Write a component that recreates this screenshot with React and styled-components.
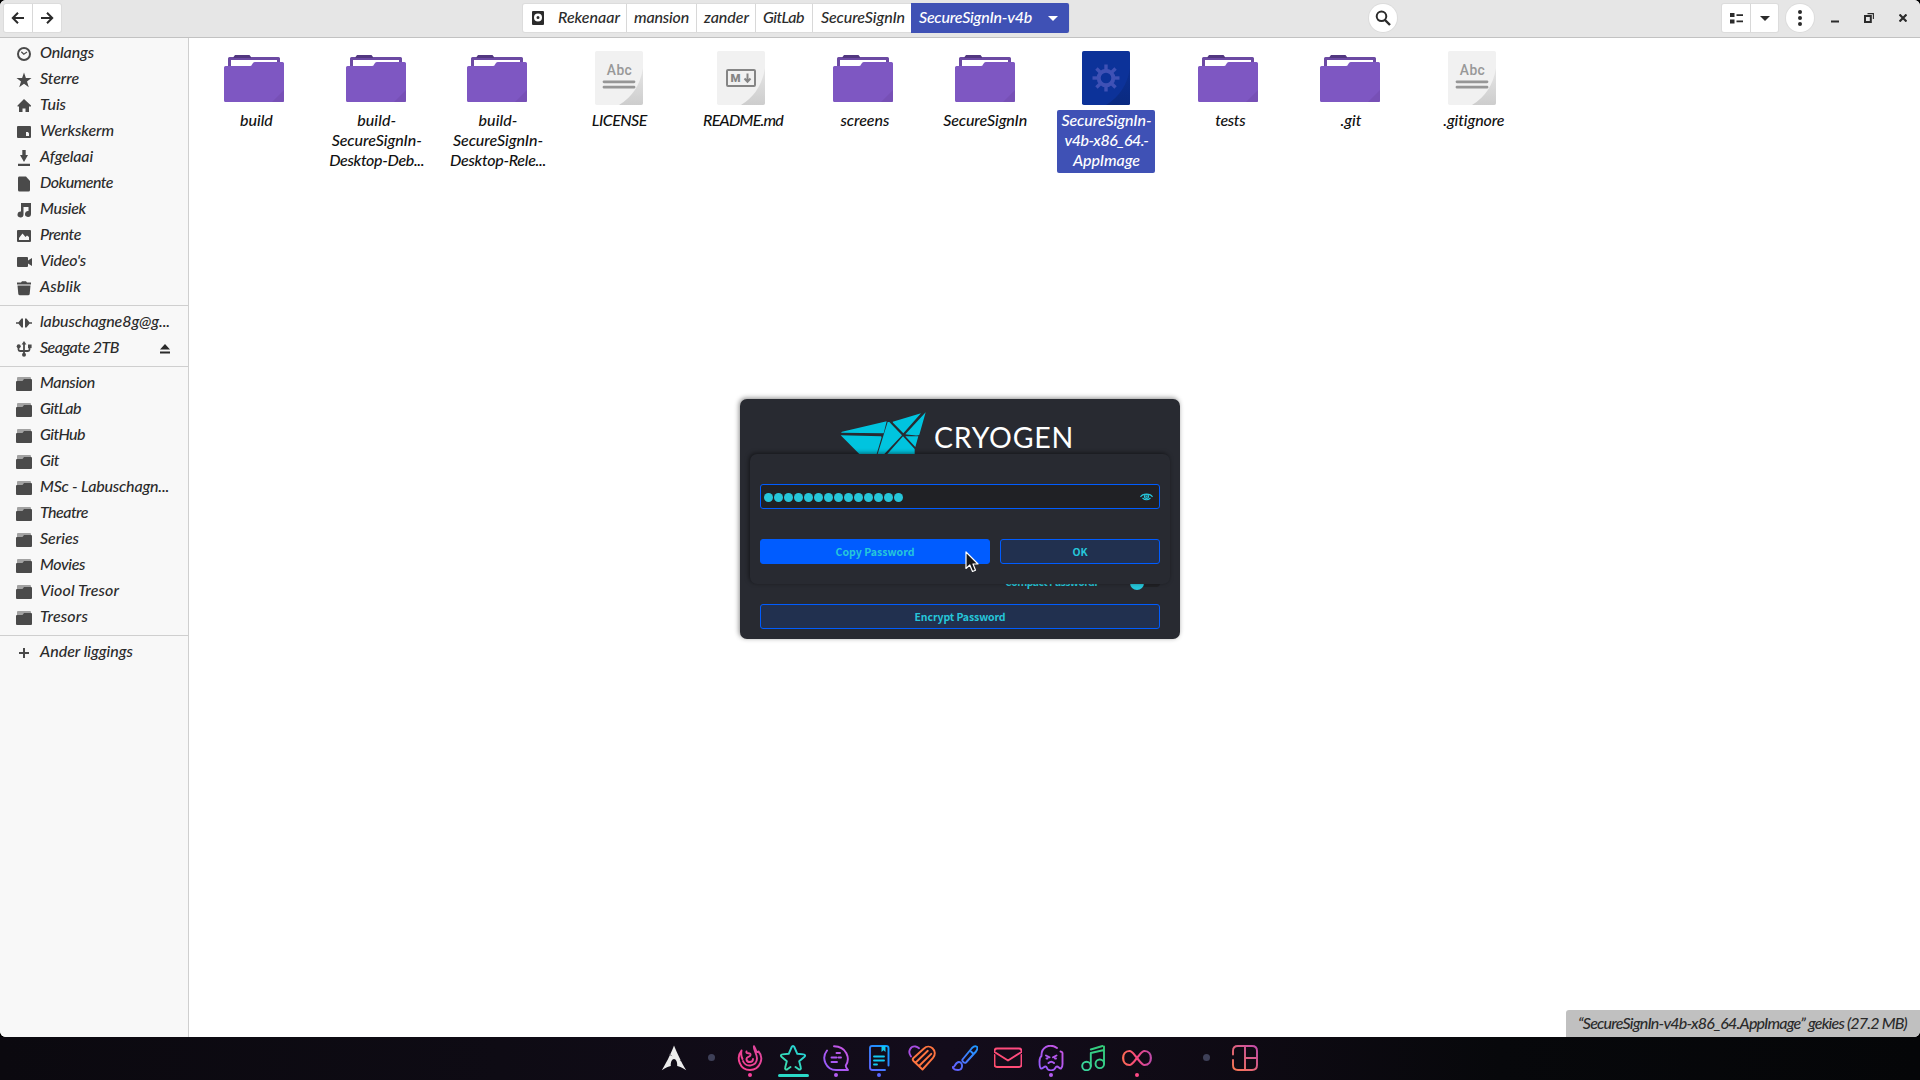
import React, { useLayoutEffect, useRef, useState } from "react";
import styled, { createGlobalStyle } from "styled-components";

const script = `Lato, "Open Sans", "Liberation Sans", sans-serif`;
const ui = `"Noto Sans CJK SC", "Noto Sans", sans-serif`;

const Global = createGlobalStyle`
  *, *::before, *::after { box-sizing: border-box; }
  html, body { margin: 0; background: #000; overflow: hidden; }
  svg { display: block; flex: none; }
`;

const FitBox = styled.span`
  display: inline-block;
  white-space: nowrap;
`;

/* Tracks a label out (or in) so that it fills the given width. */
function Fit({ w, children }) {
  const ref = useRef(null);
  const [spacing, setSpacing] = useState(0);
  useLayoutEffect(() => {
    const natural = ref.current.getBoundingClientRect().width;
    setSpacing((w - natural) / children.length);
  }, [w, children]);
  return (
    <FitBox ref={ref} style={{ letterSpacing: spacing }}>
      {children}
    </FitBox>
  );
}

/* ---------- shell ---------- */

const Screen = styled.div`
  position: relative;
  width: 1920px;
  height: 1080px;
  display: flex;
  flex-direction: column;
  background: #000;
  font-family: ${script};
  font-style: italic;
  font-weight: 500;
  font-size: 16px;
  color: #2b2b2b;
`;

const Window = styled.main`
  height: 1037px;
  display: flex;
  flex-direction: column;
  background: #fff;
  border-radius: 6px;
  overflow: hidden;
`;

const Header = styled.header`
  height: 38px;
  flex: none;
  display: flex;
  padding: 4px 0 0 4px;
  background: #e6e6e6;
  border-bottom: 1px solid #c2c2c2;
`;

const Group = styled.div`
  display: flex;
  height: 28px;
  background: #fff;
  border-radius: 2px;
  box-shadow: 0 0 0 1px #dcdcdc;
  margin-left: ${(p) => p.$left || 0}px;
`;

const Cell = styled.button`
  width: ${(p) => p.$w}px;
  height: 28px;
  padding: 0;
  border: 0;
  border-right: ${(p) => (p.$last ? 0 : "1px solid #d8d8d8")};
  background: none;
  color: #2b2b2b;
  display: flex;
  align-items: center;
  justify-content: center;
`;

const Crumb = styled.div`
  width: ${(p) => p.$w}px;
  height: 28px;
  padding: 0 0 3px ${(p) => p.$pad}px;
  border-right: ${(p) => (p.$last ? 0 : "1px solid #d8d8d8")};
  display: flex;
  align-items: center;
  gap: 14px;
`;

const DriveIcon = styled.svg`
  margin-top: 3px;
`;

const ActiveCrumb = styled.div`
  width: 158px;
  height: 30px;
  margin-top: -1px;
  padding: 0 11px 3px 8px;
  background: #3f51b5;
  color: #fff;
  border-radius: 0 2px 2px 0;
  display: flex;
  align-items: center;
  justify-content: space-between;
  svg { margin-top: 3px; }
`;

const Round = styled.button`
  width: 28px;
  height: 28px;
  padding: 0;
  margin-left: ${(p) => p.$left}px;
  border: 0;
  border-radius: 50%;
  background: #fff;
  box-shadow: 0 0 0 1px #dcdcdc;
  display: flex;
  align-items: center;
  justify-content: center;
`;

const WinControls = styled.div`
  display: flex;
  align-items: center;
  height: 28px;
  margin-left: 17px;
  gap: 25px;
`;

const Body = styled.div`
  flex: 1;
  display: flex;
  min-height: 0;
`;

/* ---------- sidebar ---------- */

const Sidebar = styled.nav`
  width: 189px;
  background: #f8f8f8;
  border-right: 1px solid #cfcfcf;
`;

const Section = styled.ul`
  list-style: none;
  margin: 0;
  padding: ${(p) => (p.$first ? "3px 0 4px" : "4px 0 4px")};
  border-bottom: ${(p) => (p.$last ? 0 : "1px solid #cfcfcf")};
`;

const Place = styled.li`
  height: 26px;
  padding: 0 18px 0 16px;
  display: flex;
  align-items: center;
  gap: 8px;
  color: #4a4a4a;
`;

const PlaceName = styled.span`
  flex: 1;
  color: #2b2b2b;
  line-height: 20px;
  margin-top: -5px;
`;

/* ---------- files ---------- */

const Files = styled.section`
  flex: 1;
  display: grid;
  grid-template-columns: repeat(11, 121.8px);
  align-content: start;
  padding: 13px 0 0 4px;
`;

const File = styled.div`
  display: flex;
  flex-direction: column;
  align-items: center;
  color: #111;
`;

const Thumb = styled.div`
  height: 54px;
  padding-top: ${(p) => (p.$folder ? 4 : 0)}px;
`;

const FileName = styled.div`
  margin-top: 5px;
  width: 98px;
  padding: 0 0 3px ${(p) => (p.$selected ? 0 : p.$shift || 0)}px;
  border-radius: 2px;
  display: flex;
  flex-direction: column;
  align-items: center;
  line-height: 20px;
  background: ${(p) => (p.$selected ? "#3f51b5" : "transparent")};
  color: ${(p) => (p.$selected ? "#fff" : "#111")};
`;

const Status = styled.div`
  position: absolute;
  right: 0;
  top: 1010px;
  width: 354px;
  height: 27px;
  padding: 0 13px 3px 12px;
  background: #c0c0c0;
  color: #2b2b2b;
  border-radius: 3px 0 6px 0;
  display: flex;
  align-items: center;
`;

/* ---------- password dialog ---------- */

const Dialog = styled.div`
  position: absolute;
  left: 740px;
  top: 399px;
  width: 440px;
  height: 240px;
  padding: 13px 20px 10px;
  border-radius: 7px;
  background: #282a31;
  box-shadow: -1px -1px 5px rgba(0, 0, 0, 0.45);
  display: flex;
  flex-direction: column;
  font-family: ${ui};
  font-style: normal;
  font-weight: 700;
  font-size: 10.5px;
  color: #26c6da;
`;

const Brand = styled.div`
  height: 42px;
  display: flex;
  padding-left: 80px;
  gap: 8px;
`;

const BrandName = styled.div`
  color: #fff;
  font: 400 28.5px/34px ${script};
  padding-top: 8px;
`;

const CompactRow = styled.div`
  flex: 1;
  display: flex;
  align-items: flex-end;
  justify-content: flex-end;
  gap: 33px;
  padding-bottom: 14px;
  line-height: 16px;
`;

const Track = styled.div`
  width: 30px;
  height: 8px;
  margin-bottom: 3px;
  border-radius: 4px;
  background: #202125;
  display: flex;
  align-items: center;
  &::before {
    content: "";
    width: 14px;
    height: 14px;
    border-radius: 50%;
    background: #26c6da;
  }
`;

const Button = styled.button`
  width: ${(p) => p.$w}px;
  height: 25px;
  padding: 0;
  border: 1px solid #005cff;
  border-radius: 3px;
  background: ${(p) => (p.$primary ? "#005cff" : "#21304f")};
  color: #26c6da;
  font: inherit;
  line-height: 22px;
`;

const Sheet = styled.div`
  position: absolute;
  left: 10px;
  top: 55px;
  width: 420px;
  height: 130px;
  padding: 30px 10px 20px;
  border-radius: 7px;
  background: #282a31;
  box-shadow: -1px -1px 4px rgba(0, 0, 0, 0.5);
  display: flex;
  flex-direction: column;
  justify-content: space-between;
`;

const Field = styled.div`
  height: 25px;
  border: 1px solid #005cff;
  border-radius: 3px;
  background: #202125;
  padding: 0 6px 0 2.5px;
  display: flex;
  align-items: center;
  justify-content: space-between;
`;

const Dots = styled.div`
  display: flex;
  gap: 1px;
  padding-top: 2px;
`;

const Dot = styled.i`
  width: 9px;
  height: 9px;
  border-radius: 50%;
  background: #26c6da;
`;

const Buttons = styled.div`
  display: flex;
  gap: 10px;
`;

const Pointer = styled.svg`
  position: absolute;
  left: 965px;
  top: 551px;
`;

/* ---------- dock ---------- */

const Dock = styled.footer`
  height: 43px;
  padding-left: 652px;
  display: flex;
  background: linear-gradient(90deg, #0b090f 0, #0e0b14 500px, #130c1b 950px, #0e0a13 1250px, #07080b 1500px, #050608 100%);
`;

const Launcher = styled.div`
  position: relative;
  width: 43px;
  height: 43px;
  padding-bottom: 1px;
  display: flex;
  align-items: center;
  justify-content: center;
  &::after {
    content: "";
    position: absolute;
    left: ${(p) => (p.$active ? 6 : 19.5)}px;
    top: ${(p) => (p.$active ? 36.5 : 36)}px;
    width: ${(p) => (p.$active ? 31 : 4)}px;
    height: ${(p) => (p.$active ? 3 : 4)}px;
    border-radius: 2px;
    background: ${(p) => p.$run || "transparent"};
  }
`;

const Divider = styled.div`
  width: 33.5px;
  margin-left: ${(p) => p.$left || 0}px;
  display: flex;
  align-items: center;
  justify-content: center;
  &::before {
    content: "";
    width: 7px;
    height: 7px;
    margin-top: -2px;
    border-radius: 50%;
    background: #3e4058;
  }
`;

/* ---------- drawings ---------- */

const Arrow = ({ flip }) => (
  <svg width="14" height="14" viewBox="0 0 14 14" fill="none" stroke="#2b2b2b" strokeWidth="2" transform={flip ? "scale(-1 1)" : undefined}>
    <path d="M13 7H2.5M7 1.8 1.8 7 7 12.2" />
  </svg>
);

const Caret = ({ color = "#2b2b2b" }) => (
  <svg width="10" height="5" viewBox="0 0 10 5">
    <path d="M0 0h10L5 5z" fill={color} />
  </svg>
);

const FolderArt = () => (
  <svg width="60" height="47" viewBox="0 0 60 47">
    <path d="M4 12V3.5Q4 2 5.500 2H54.500Q56 2 56 3.500V9H53V5H7V12z" fill="#6c4aa3" />
    <path d="M9.500 2 11 0H25.500L27 2V3H9.500z" fill="#523780" />
    <path d="M0 12.500Q0 11 1.500 11H26Q27.500 11 28 9.500L29 8Q29.600 7 31 7H58.500Q60 7 60 8.500V45.500Q60 47 58.500 47H1.500Q0 47 0 45.500z" fill="#7e57c2" />
    <path d="M60 35 48 47H58.500Q60 47 60 45.500z" fill="#7750b6" />
  </svg>
);

const Sheet54 = ({ children, id, blue }) => (
  <svg width="48" height="54" viewBox="0 0 48 54">
    <defs>
      <linearGradient id={id} x1="0" y1="0" x2="0" y2="1">
        <stop offset="0" stopColor={blue ? "#0b2f90" : "#e6e6e6"} />
        <stop offset="1" stopColor={blue ? "#0a2a80" : "#cdcdcd"} />
      </linearGradient>
    </defs>
    <rect width="48" height="54" rx="1.8" fill={blue ? "#0c3299" : "#f1f1f1"} />
    <path d="M48 17Q44 42 24 54H46.200Q48 54 48 52.200z" fill={`url(#${id})`} />
    {children}
  </svg>
);

const AbcArt = ({ id }) => (
  <Sheet54 id={id}>
    <text x="11.800" y="24.200" fontFamily="Roboto, sans-serif" fontStyle="normal" fontWeight="500" fontSize="13.800" textLength="25" fill="#989898">Abc</text>
    <path d="M9 30.800h30M9 36.200h30" stroke="#969696" strokeWidth="2.800" strokeLinecap="round" />
  </Sheet54>
);

const MdArt = () => (
  <Sheet54 id="md">
    <rect x="10" y="19" width="28" height="16" rx="1" fill="none" stroke="#858585" strokeWidth="2" />
    <text x="13.500" y="31" fontFamily="Roboto, sans-serif" fontStyle="normal" fontWeight="900" fontSize="11.500" fill="#858585">M</text>
    <path d="M30.500 22.500v7M27.500 27.500l3 3.200 3-3.200" fill="none" stroke="#858585" strokeWidth="2" />
  </Sheet54>
);

const GearArt = () => (
  <Sheet54 id="gear" blue>
    <g stroke="#3f51b5" fill="none">
      <circle cx="24" cy="27" r="7.300" strokeWidth="4" />
      {[0, 45, 90, 135, 180, 225, 270, 315].map((a) => (
        <path key={a} d="M24 18.500V13.500" strokeWidth="3.400" transform={`rotate(${a} 24 27)`} />
      ))}
    </g>
  </Sheet54>
);

const glyphs = {
  clock: <><circle cx="8" cy="8" r="6" fill="none" stroke="currentColor" strokeWidth="2" /><path d="M5.300 5.800 7.800 8.200 11 6" fill="none" stroke="currentColor" strokeWidth="1.300" /></>,
  star: <path d="M8 .5 9.900 6H15.500L11 9.400 12.800 15.200 8 11.700 3.200 15.200 5 9.400 .5 6H6.100z" />,
  home: <path d="M8 1 1.500 7.500V8.500H3V14H6.500V10.500H9.500V14H13V8.500H15V7.500z" />,
  desk: <path fillRule="evenodd" d="M2 2H14Q15 2 15 3V13Q15 14 14 14H2Q1 14 1 13V3Q1 2 2 2zM10 8V12H13V9.500L12 8z" />,
  down: <path d="M6.300 0H9.700V5H12L8 12 4 5H6.300zM2 13.800H14V16H2z" />,
  doc: <path d="M3 .5H10L14 5V14Q14 15.500 12.500 15.500H3.500Q2 15.500 2 14V2Q2 .5 3 .5z" />,
  music: <path d="M5 1H15V12A3 3 0 1 1 12.500 9V5H7.500V12.500A3 3 0 1 1 5 9.500z" />,
  pic: <path fillRule="evenodd" d="M2 2H14Q15 2 15 3V13Q15 14 14 14H2Q1 14 1 13V3Q1 2 2 2zM3 12H13V9L11 7.500 9.500 9 6.500 5.500 3 10z" />,
  video: <path d="M2 3H11Q12 3 12 4V6.500L16 4V12L12 9.500V12Q12 13 11 13H2Q1 13 1 12V4Q1 3 2 3z" />,
  trash: <path d="M1 2.500H5L6 1.200H10L11 2.500H15V4.500H1zM1.500 5.500H14.500L13.700 14Q13.500 15.300 12 15.300H4Q2.500 15.300 2.300 14z" />,
  net: <path d="M0 7.200H2.500L5.500 3.500H7V12.500H5.500L2.500 8.800H0zM16 7.200H13.500L10.500 3.500H9V12.500H10.500L13.500 8.800H16z" />,
  usb: <><path d="M8 2V14M2.500 5V8.500Q2.500 10 4 10H12Q13.500 10 13.500 8.500V5" fill="none" stroke="currentColor" strokeWidth="1.800" /><path d="M5.600 3.500 8 0 10.400 3.500z" /><rect x="12" y="3.500" width="3.600" height="3.600" /><circle cx="2.700" cy="5.300" r="2" /><circle cx="8" cy="13.800" r="2" /></>,
  folder: <><path d="M1 5V2Q1 1 2 1H14Q15 1 15 2V4H9L7 5z" fill="#a2a2a2" /><path d="M0 6Q0 5 1 5H6.500L8 3H15Q16 3 16 4V14Q16 15 15 15H1Q0 15 0 14z" /></>,
  plus: <path d="M7 3H9V7H13V9H9V13H7V9H3V7H7z" />,
};

const Glyph = ({ name }) => (
  <svg width="16" height="16" viewBox="0 0 16 16" fill="currentColor">{glyphs[name]}</svg>
);

const Line = ({ id, from, to, children, w = 26, h = 26 }) => (
  <svg width={w} height={h} viewBox="0 0 26 26" fill="none" stroke={`url(#${id})`} strokeWidth="1.900" strokeLinecap="round" strokeLinejoin="round">
    <defs>
      <linearGradient id={id} gradientUnits="userSpaceOnUse" x1="0" y1="26" x2="26" y2="0">
        <stop offset="0" stopColor={from} />
        <stop offset="1" stopColor={to} />
      </linearGradient>
    </defs>
    {children}
  </svg>
);

const ArchArt = () => (
  <svg width="26" height="26" viewBox="0 0 26 26">
    <path d="M13 .5C11 6 7 15 .8 25.300 5 22.500 7.500 21.500 9.800 21 9.500 17 11 14 13 14S16.500 17 16.200 21C18.500 21.500 21 22.500 25.200 25.300 23 21.700 21.500 19 20.300 16.500L18.500 15.200 19.800 15.400C16.500 8.500 14.300 4 13 .5zM8.500 8.800 11.500 11.300 9 10z" fill="#ededed" />
  </svg>
);

const dockApps = [
  { run: "#f7419b", art: (
    <Line id="d1" from="#ff3f8e" to="#d8479f">
      <path d="M4.500 5.500C-1.500 13 3 25 13 25S27.500 13 21.500 6.500C20.500 7.500 19.500 7 19 5.500 18.500 4 17.500 2.500 17 1.200 16 4.500 20 8 20 13.500A7.300 7.300 0 0 1 6 16M4.500 5.500C4 8 4.500 12 5.500 14M9.500 6.500C8.500 9.500 14 7 13.500 10 13 12.500 9 11.500 9.500 14.500 10 18 16 18 16 14" />
    </Line>) },
  { run: "#2bd9c8", active: true, art: (
    <Line id="d2" from="#3fe0a4" to="#22cfe0">
      <path d="M10.500 22 7.300 24.300C6 25 4.800 24 5.200 22.600L6.800 16.300 1.500 11.700C.4 10.700 .9 9.500 2.300 9.400L8.700 8.800 11.700 2C12.300 .7 13.700 .7 14.300 2L17.300 8.800 23.700 9.400C25.100 9.500 25.600 10.700 24.500 11.700L19.200 16.300 20.800 22.600C21.200 24 20 25 18.700 24.300L15.500 22" />
    </Line>) },
  { run: "#b45cf0", art: (
    <Line id="d3" from="#8f5bff" to="#d055e0">
      <path d="M4 5.500A12 12 0 0 0 13 25H25C24 23.500 22.500 22.500 22.800 20.500 27.500 13.500 23.500 1.200 11 1.200M13.500 8H17M8.500 12.500H13.500M15.500 12.500H18M8.500 17H14" />
    </Line>) },
  { run: "#5a66ff", art: (
    <Line id="d4" from="#6a5cff" to="#00a8ff">
      <path d="M19 25H6.500Q4 25 4 22.500V3Q4 1 6 1H20Q22.500 1 22.500 3V20.500" />
      <path d="M8 11.500H18M8 15.500H18M8 19.500H11" stroke="#12c8f0" />
      <path d="M15.500 1H19.500V7L17.500 5.300 15.500 7z" fill="#12c8f0" stroke="none" />
    </Line>) },
  { art: (
    <svg width="28" height="26" viewBox="0 0 28 26" fill="none" strokeWidth="1.900" strokeLinecap="round" strokeLinejoin="round">
      <path d="M3 11.500C-1 6 3 .8 7.500 1.500Q9.500 1.800 11 3.200" stroke="#a84de0" />
      <path d="M14.500 24.500 5.500 16Q4 14.500 5.500 13L16 3.500C18.500 1 22 1 24.500 3.300 27.500 6 27.500 10 25 12.800zM9 19.300 21.500 6.500M6 15.500 19 12" stroke="none" />
      <path d="M14.500 24.500 5.500 16Q4 14.500 5.500 13L16 3.500C18.500 1 22 1 24.500 3.300 27.500 6 27.500 10 25 12.800zM7.500 17.800 19.800 5.800M11 21 23.300 8.800" stroke="#ff7540" />
    </svg>) },
  { art: (
    <Line id="d6" from="#6a5cff" to="#199bff">
      <path d="M.8 22C3 23 3 17 7 17S11.500 25 6 25 .8 22 .8 22zM10.500 14.500 20 3Q22.500 .500 24.500 1.500T24 6.500L14 17.500C12.500 18.800 9.500 16 10.500 14.500zM19 6.500 21.500 9" />
    </Line>) },
  { art: (
    <Line id="d7" from="#ff4d6a" to="#ff4a86" w={28}>
      <path d="M-.5 10V19.500Q-.500 22 2 22H24Q26.500 22 26.500 19.500V10M-.500 7V6Q-.500 3.500 2 3.500H24Q26.500 3.500 26.500 6V7L13 15.500-.500 7" />
    </Line>) },
  { run: "#b45cf0", art: (
    <Line id="d8" from="#8f5bff" to="#d055e0">
      <path d="M19 3C11-2.500 3 3 3.500 11 2 12 1.500 14 1.500 16.500 1.500 20 1.800 23 3 23.500 4.500 24 6 21.500 7.500 21.500S9 24 10 24.500C11.500 25.500 14.500 25.500 16 24.500 17 24 17.500 21.500 19 21.500S21.500 24 23 23.500C25 22 24.500 19 24.500 17V8M24.500 8Q24.500 7 22.500 6.500M8 10.500 11.500 12.300M18.500 10.500 15 12.300M8.500 13.500H9.500M17 13.500H18M10.500 18Q13.200 15.500 16 18" />
    </Line>) },
  { art: (
    <Line id="d9" from="#3bd6a0" to="#31c873">
      <circle cx="5.500" cy="21" r="4.300" /><circle cx="18.800" cy="18.800" r="4.300" />
      <path d="M9.800 21V8L23 5V18.500M9.800 4.500 21.500 1M23 5V1.500" />
    </Line>) },
  { run: "#ff4a86", art: (
    <svg width="30" height="26" viewBox="0 0 30 26" fill="none" strokeWidth="2.200" stroke="url(#inf)">
      <defs><linearGradient id="inf"><stop offset="0" stopColor="#ff6a55" /><stop offset=".5" stopColor="#f7477f" /><stop offset="1" stopColor="#c04aa8" /></linearGradient></defs>
      <path d="M15 13C11 8 10 6 7.500 6 -1 6-1 20 7.500 20 10 20 11 18 15 13S20 6 22.500 6C31 6 31 20 22.500 20 20 20 19 18 15 13z" />
    </svg>) },
];

const LogoArt = () => (
  <svg width="86" height="42" viewBox="330 66 258 126" fill="#00c4df">
    <path d="M333 128 336 125 470 94 461 130zM332 136 453 139Q456 141 454 145L440 192H388zM478 96 516 136 463 192H443L473 96zM488 95 573 70 520 130 489 98zM587 67 568 134Q566 139 526 133zM526 139H565L556 171zM519 139 554 177V192H472z" />
  </svg>
);

const EyeArt = () => (
  <svg width="13" height="9" viewBox="0 0 13 9" fill="none" stroke="#26c6da" strokeWidth="1.200">
    <path d="M.5 5C2.500 1.200 10.500 1.200 12.500 5M2.500 6Q6.500 9.500 10.500 6" />
    <circle cx="6.500" cy="4.500" r="2" />
    <circle cx="6.500" cy="4.500" r=".4" />
  </svg>
);

/* ---------- data ---------- */

const places = [
  [["clock", "Onlangs", 54], ["star", "Sterre", 39], ["home", "Tuis", 26], ["desk", "Werkskerm", 74], ["down", "Afgelaai", 53], ["doc", "Dokumente", 73], ["music", "Musiek", 46], ["pic", "Prente", 41], ["video", "Video's", 46], ["trash", "Asblik", 41]],
  [["net", "labuschagne8g@g...", 130], ["usb", "Seagate 2TB", 79]],
  [["folder", "Mansion", 55], ["folder", "GitLab", 41], ["folder", "GitHub", 45], ["folder", "Git", 19], ["folder", "MSc - Labuschagn...", 129], ["folder", "Theatre", 48], ["folder", "Series", 39], ["folder", "Movies", 45], ["folder", "Viool Tresor", 79], ["folder", "Tresors", 48]],
  [["plus", "Ander liggings", 93]],
];

const files = [
  { art: "folder", shift: 5, lines: [["build", 33]] },
  { art: "folder", shift: 2, lines: [["build-", 39], ["SecureSignIn-", 90], ["Desktop-Deb...", 95]] },
  { art: "folder", shift: 1, lines: [["build-", 39], ["SecureSignIn-", 90], ["Desktop-Rele...", 96]] },
  { art: "abc", lines: [["LICENSE", 55]] },
  { art: "md", shift: 4, lines: [["README.md", 80]] },
  { art: "folder", shift: 4, lines: [["screens", 49]] },
  { art: "folder", shift: 1, lines: [["SecureSignIn", 84]] },
  { art: "gear", selected: true, lines: [["SecureSignIn-", 90], ["v4b-x86_64.-", 84], ["AppImage", 67]] },
  { art: "folder", shift: 4, lines: [["tests", 30]] },
  { art: "folder", shift: 2, lines: [[".git", 21]] },
  { art: "abc", shift: 4, lines: [[".gitignore", 61]] },
];

const crumbs = [["mansion", 55, 70, 7], ["zander", 45, 59, 7], ["GitLab", 41, 57, 7], ["SecureSignIn", 84, 98, 8]];

export default function App() {
  return (
    <Screen>
      <Global />
      <Window>
        <Header>
          <Group>
            <Cell $w={29}><Arrow /></Cell>
            <Cell $w={28} $last><Arrow flip /></Cell>
          </Group>
          <Group $left={462}>
            <Crumb $w={104} $pad={9}>
              <DriveIcon width="12" height="14" viewBox="0 0 12 14">
                <path fillRule="evenodd" d="M1 0H11Q12 0 12 1V13Q12 14 11 14H1Q0 14 0 13V1Q0 0 1 0zM6 2.500A4 4 0 1 0 6 10.500 4 4 0 1 0 6 2.500zM6 5A1.500 1.500 0 1 1 6 8 1.500 1.500 0 1 1 6 5z" fill="#2b2b2b" />
              </DriveIcon>
              <Fit w={62}>Rekenaar</Fit>
            </Crumb>
            {crumbs.map(([t, w, cell, pad], i) => (
              <Crumb key={t} $w={cell} $pad={pad} $last={i === 3}><Fit w={w}>{t}</Fit></Crumb>
            ))}
            <ActiveCrumb><Fit w={113}>SecureSignIn-v4b</Fit><Caret color="#fff" /></ActiveCrumb>
          </Group>
          <Round $left={300}>
            <svg width="16" height="16" viewBox="0 0 16 16" fill="none" stroke="#2b2b2b" strokeWidth="2"><circle cx="6.500" cy="6.300" r="4.800" /><path d="M10 10 15 15" strokeWidth="2.400" /></svg>
          </Round>
          <Group $left={325}>
            <Cell $w={29}>
              <svg width="13" height="11" viewBox="0 0 13 11" fill="#2b2b2b"><path d="M0 0H4.500V4H0zM0 6.500H4.500V10.500H0zM6.500 1.200H13V3H6.500zM6.500 7.500H13V9.300H6.500z" /></svg>
            </Cell>
            <Cell $w={27} $last><Caret /></Cell>
          </Group>
          <Round $left={8}>
            <svg width="4" height="16" viewBox="0 0 4 16" fill="#2b2b2b"><circle cx="2" cy="2" r="2" /><circle cx="2" cy="8" r="2" /><circle cx="2" cy="14" r="2" /></svg>
          </Round>
          <WinControls>
            <svg width="8" height="10" viewBox="0 0 8 10"><path d="M0 7.500H8V9.500H0z" fill="#2b2b2b" /></svg>
            <svg width="10" height="10" viewBox="0 0 10 10" fill="none" stroke="#2b2b2b"><rect x="1" y="3" width="5.800" height="6" strokeWidth="2" /><path d="M3.500 .6H9.400V6" strokeWidth="1.100" /></svg>
            <svg width="8" height="8" viewBox="0 0 8 8" stroke="#2b2b2b" strokeWidth="2.200"><path d="M.5 .5 7.500 7.500M7.500 .5 .5 7.500" /></svg>
          </WinControls>
        </Header>
        <Body>
          <Sidebar>
            {places.map((group, i) => (
              <Section key={i} $first={i === 0} $last={i === 3}>
                {group.map(([icon, name, w]) => (
                  <Place key={name}>
                    <Glyph name={icon} />
                    <PlaceName><Fit w={w}>{name}</Fit></PlaceName>
                    {icon === "usb" && <svg width="10" height="10" viewBox="0 0 10 10" fill="#2b2b2b"><path d="M5 0 10 5.500H0zM0 7.500H10V9.500H0z" /></svg>}
                  </Place>
                ))}
              </Section>
            ))}
          </Sidebar>
          <Files>
            {files.map((f, i) => (
              <File key={i}>
                <Thumb $folder={f.art === "folder"}>
                  {f.art === "folder" && <FolderArt />}
                  {f.art === "abc" && <AbcArt id={`abc${i}`} />}
                  {f.art === "md" && <MdArt />}
                  {f.art === "gear" && <GearArt />}
                </Thumb>
                <FileName $selected={f.selected} $shift={f.shift}>
                  {f.lines.map(([t, w]) => <Fit key={t} w={w}>{t}</Fit>)}
                </FileName>
              </File>
            ))}
          </Files>
        </Body>
      </Window>

      <Status><Fit w={329}>“SecureSignIn-v4b-x86_64.AppImage” gekies (27.2 MB)</Fit></Status>

      <Dialog>
        <Brand>
          <LogoArt />
          <BrandName><Fit w={140}>CRYOGEN</Fit></BrandName>
        </Brand>
        <CompactRow>
          <Fit w={92}>Compact Password:</Fit>
          <Track />
        </CompactRow>
        <Button $w={400}><Fit w={91}>Encrypt Password</Fit></Button>
        <Sheet>
          <Field>
            <Dots>{Array.from({ length: 14 }, (_, i) => <Dot key={i} />)}</Dots>
            <EyeArt />
          </Field>
          <Buttons>
            <Button $w={230} $primary><Fit w={79}>Copy Password</Fit></Button>
            <Button $w={160}><Fit w={15}>OK</Fit></Button>
          </Buttons>
        </Sheet>
      </Dialog>
      <Pointer width="15" height="23" viewBox="0 0 15 23">
        <path d="M1 1V17.500L4.800 14 7.500 20.500 10.500 19.200 8 13H13z" fill="#16171a" stroke="#fff" strokeWidth="1.200" strokeLinejoin="round" />
      </Pointer>

      <Dock>
        <Launcher><ArchArt /></Launcher>
        <Divider />
        {dockApps.map((a, i) => <Launcher key={i} $run={a.run} $active={a.active}>{a.art}</Launcher>)}
        <Divider $left={31.5} />
        <Launcher>
          <Line id="lay" from="#ff7a4d" to="#c04ab0">
            <path d="M1 9.500V6Q1 1 6 1H20Q25 1 25 6V20Q25 25 20 25H6Q1 25 1 20V15M13 1V25M13 13H25" />
          </Line>
        </Launcher>
      </Dock>
    </Screen>
  );
}
